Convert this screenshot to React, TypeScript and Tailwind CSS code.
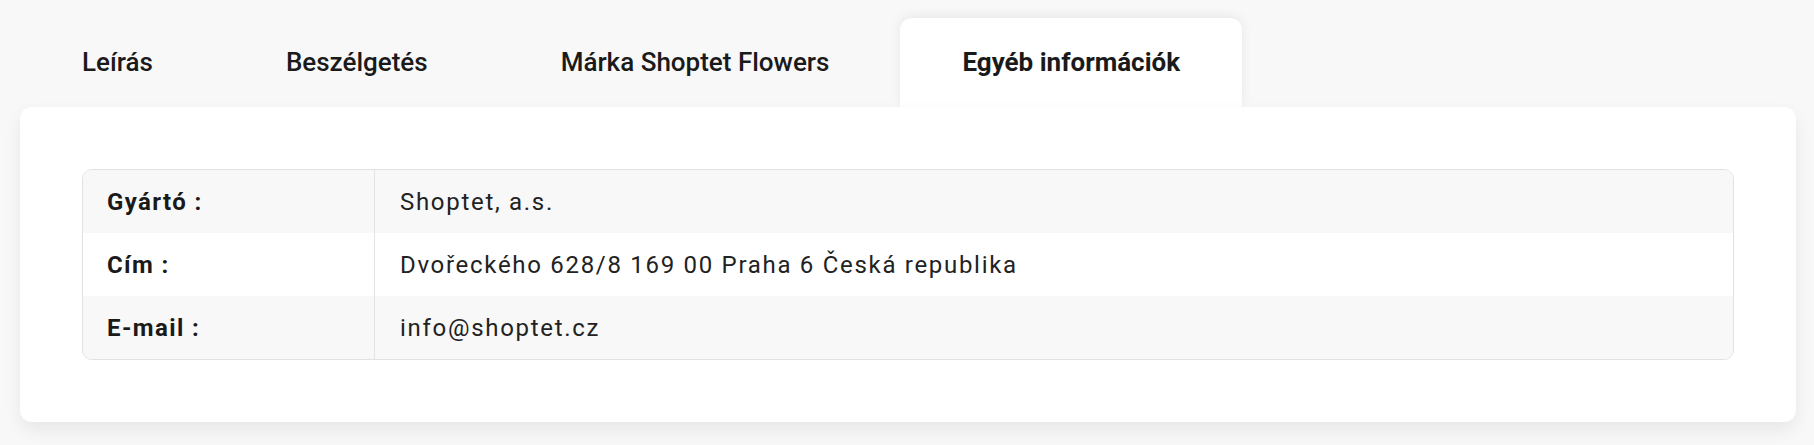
import { useState } from 'react'

const tabs = ['Leírás', 'Beszélgetés', 'Márka Shoptet Flowers', 'Egyéb információk']

const rows = [
	['Gyártó :', 'Shoptet, a.s.'],
	['Cím :', 'Dvořeckého 628/8 169 00 Praha 6 Česká republika'],
	['E-mail :', 'info@shoptet.cz']
]

export default function App() {
	const [active, setActive] = useState(3)

	return (
		<div className="min-h-[445px] w-full bg-[#f8f8f8] px-5 pt-[18px] font-['Roboto',sans-serif] text-[#1a1a1a]">
			<div className="flex gap-[9px]">
				{tabs.map((tab, i) => (
					<button
						key={tab}
						onClick={() => setActive(i)}
						className={`h-[89px] rounded-t-xl px-[62px] text-[26px] ${
							active === i
								? 'bg-white font-bold shadow-[0_-2px_12px_rgba(0,0,0,0.07)]'
								: 'font-medium'
						}`}
					>
						{tab}
					</button>
				))}
			</div>
			<div className="relative mr-[-2px] rounded-xl bg-white p-[62px] shadow-[0_8px_18px_rgba(0,0,0,0.07)]">
				<div className="overflow-hidden rounded-[10px] border border-[#e2e2e2]">
					{rows.map(([label, value], i) => (
						<div key={label} className={`flex h-[63px] items-center ${i % 2 === 0 ? 'bg-[#f8f8f8]' : 'bg-white'}`}>
							<div className="flex h-full w-[292px] items-center border-r border-[#e4e4e4] pl-6 text-[24px] font-bold tracking-[1.4px]">
								{label}
							</div>
							<div className="pl-[25px] text-[24px] tracking-[1.7px] text-[#222]">{value}</div>
						</div>
					))}
				</div>
			</div>
		</div>
	)
}
